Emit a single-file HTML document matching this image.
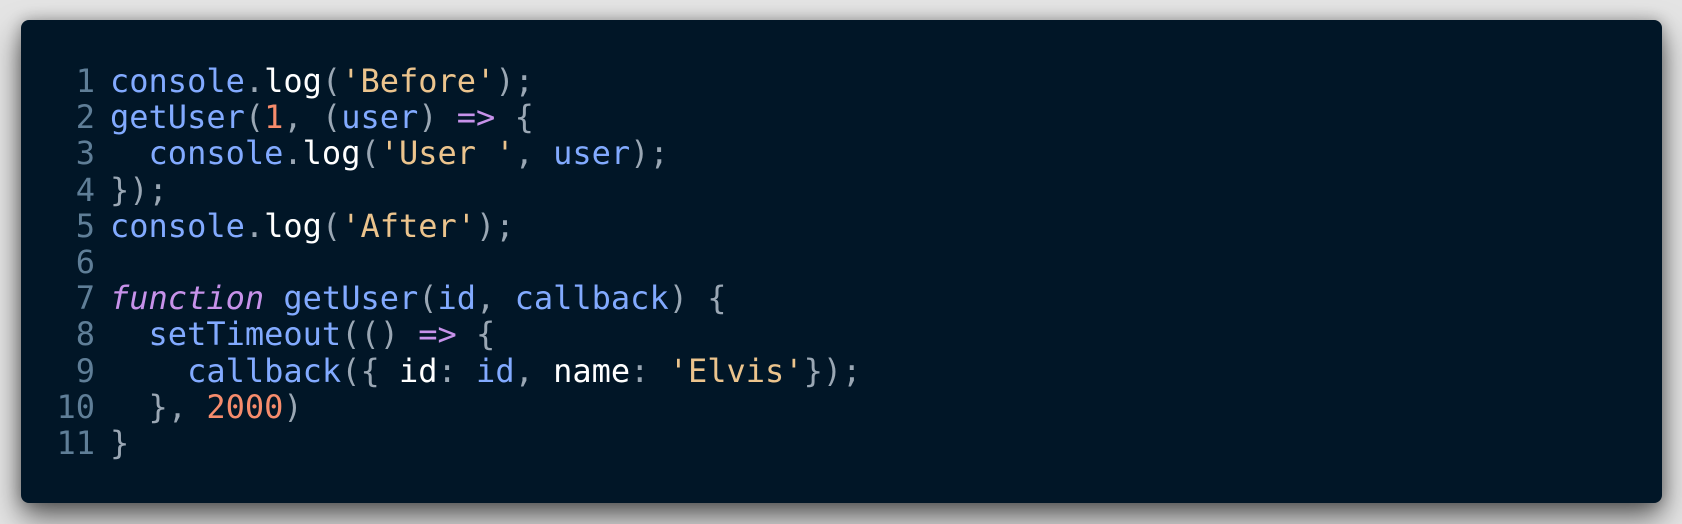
<!DOCTYPE html>
<html><head><style>
html,body{margin:0;padding:0;width:1682px;height:524px;overflow:hidden;background:#e4e4e4;}
.card{position:absolute;left:21px;top:20px;width:1641px;height:483px;background:#011627;border-radius:8px;box-shadow:0 14px 30px rgba(0,0,0,.6),0 0 14px rgba(0,0,0,.25);}
pre{margin:0;position:absolute;top:63px;left:0;font-family:"DejaVu Sans Mono","Liberation Mono",monospace;font-size:32px;line-height:36.2px;color:#d6deeb;}
.n{display:inline-block;width:95px;text-align:right;color:#5f7e97;margin-right:15px;}
.b{color:#82aaff}.s{color:#ecc48d}.d{color:#f78c6c}.p{color:#c792ea}.g{color:#9aa7b4}.w{color:#ffffff}
i{color:#c792ea}
</style></head><body>
<div class="card"></div>
<pre><span class="n">1</span><span class="b">console</span><span class="g">.</span><span class="w">log</span><span class="g">(</span><span class="s">'Before'</span><span class="g">);</span>
<span class="n">2</span><span class="b">getUser</span><span class="g">(</span><span class="d">1</span><span class="g">, (</span><span class="b">user</span><span class="g">)</span> <span class="p">=&gt;</span> <span class="g">{</span>
<span class="n">3</span>  <span class="b">console</span><span class="g">.</span><span class="w">log</span><span class="g">(</span><span class="s">'User '</span><span class="g">, </span><span class="b">user</span><span class="g">);</span>
<span class="n">4</span><span class="g">});</span>
<span class="n">5</span><span class="b">console</span><span class="g">.</span><span class="w">log</span><span class="g">(</span><span class="s">'After'</span><span class="g">);</span>
<span class="n">6</span>
<span class="n">7</span><i>function</i> <span class="b">getUser</span><span class="g">(</span><span class="b">id</span><span class="g">, </span><span class="b">callback</span><span class="g">) {</span>
<span class="n">8</span>  <span class="b">setTimeout</span><span class="g">(()</span> <span class="p">=&gt;</span> <span class="g">{</span>
<span class="n">9</span>    <span class="b">callback</span><span class="g">({</span> <span class="w">id</span><span class="g">:</span> <span class="b">id</span><span class="g">,</span> <span class="w">name</span><span class="g">:</span> <span class="s">'Elvis'</span><span class="g">});</span>
<span class="n">10</span>  <span class="g">},</span> <span class="d">2000</span><span class="g">)</span>
<span class="n">11</span><span class="g">}</span></pre>
</body></html>
